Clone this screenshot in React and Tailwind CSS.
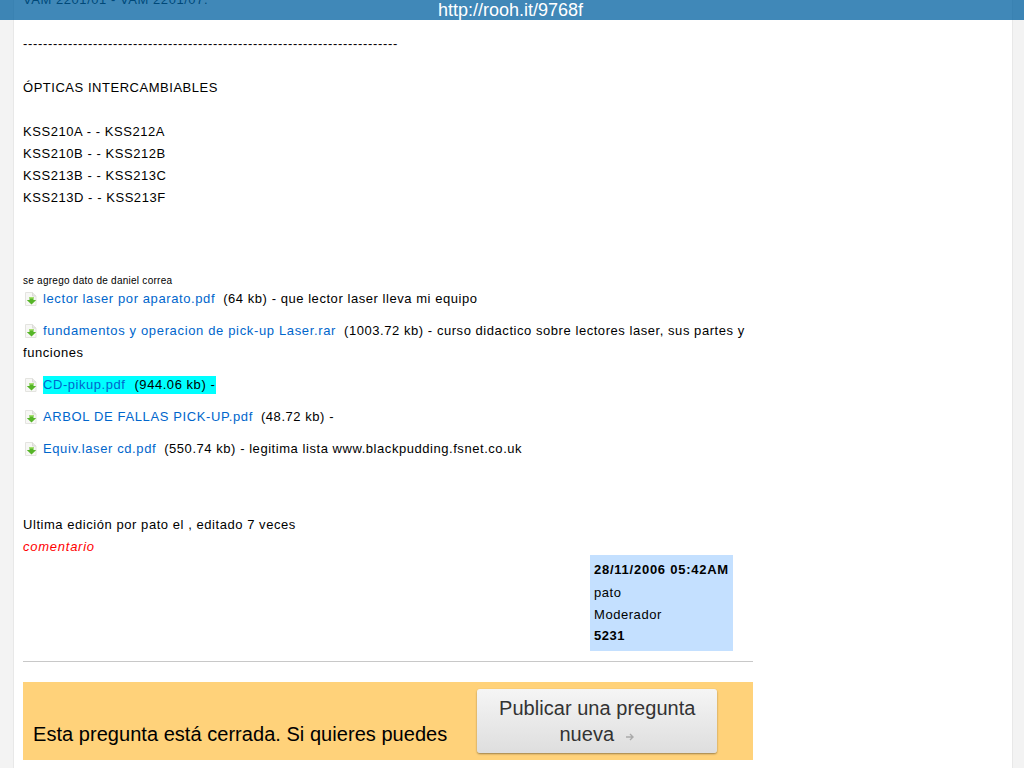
import React from "react";

const FileIcon = () => (
  <svg width="16" height="16" viewBox="0 0 16 16" className="inline-block align-[-4px] mr-[4px]">
    <path d="M2.5 1.5h7l3.5 3.5v9.5H2.5z" fill="#f7f7f5" stroke="#e4e4e0" />
    <path d="M9.5 1.5V5H13" fill="#e8e8e4" stroke="#dcdcd8" />
    <path d="M6.5 6h4v3h2.7l-4.7 4.5L3.8 9h2.7z" fill="#56b528" />
    <path d="M6.5 6h4v1.5h-4z" fill="#a5e06a" />
  </svg>
);

const Attachment = ({ name, linkClass = "tracking-[0.6px]", children }) => (
  <p className="mb-[10px]">
    <FileIcon />
    <a className={`text-[#0066cc] ${linkClass}`}>{name}</a>
    <span className="ml-[8px]">{children}</span>
  </p>
);

export default function App() {
  return (
    <div className="relative h-screen overflow-hidden bg-[#f3f3f3] font-['Liberation_Sans',sans-serif] text-[13px] leading-[22px] tracking-[0.55px] text-black">
      {/* Short link bar */}
      <div className="absolute top-0 left-0 right-0 h-5 bg-[#0060a0]/75 pr-[3px] text-center text-[18px] leading-[21px] tracking-normal text-white z-10">
        http://rooh.it/9768f
      </div>

      <div className="ml-[13px] w-[1000px] h-full overflow-hidden bg-white border-x border-[#e8e8e8] pl-[9px]">
        <div className="w-[730px] mt-[-11px]">
          <p>VAM 2201/01 - VAM 2201/07.</p>
          <p className="mt-[22px] tracking-[0.67px]">---------------------------------------------------------------------------</p>
          <p className="mt-[22px] tracking-[0.53px]">ÓPTICAS INTERCAMBIABLES</p>
          <p className="mt-[22px]">KSS210A - - KSS212A</p>
          <p>KSS210B - - KSS212B</p>
          <p>KSS213B - - KSS213C</p>
          <p>KSS213D - - KSS213F</p>

          <p className="mt-[66px] h-[13px] text-[10px] leading-[12px] tracking-[0.26px]">se agrego dato de daniel correa</p>
          <Attachment name="lector laser por aparato.pdf">(64 kb) - que lector laser lleva mi equipo</Attachment>
          <Attachment name="fundamentos y operacion de pick-up Laser.rar" linkClass="tracking-[0.65px]">
            (1003.72 kb) - curso didactico sobre lectores laser, sus partes y funciones
          </Attachment>
          <p className="mb-[10px]">
            <FileIcon />
            <span className="inline-block bg-[#00ffff] leading-[18px] pr-[1px]">
              <a className="text-[#0066cc]">CD-pikup.pdf</a>
              <span className="ml-[9px]">(944.06 kb) -</span>
            </span>
          </p>
          <Attachment name="ARBOL DE FALLAS PICK-UP.pdf" linkClass="tracking-[0.63px]">(48.72 kb) -</Attachment>
          <Attachment name="Equiv.laser cd.pdf">(550.74 kb) - legitima lista www.blackpudding.fsnet.co.uk</Attachment>

          <p className="mt-[54px]">Ultima edición por pato el , editado 7 veces</p>
          <p className="italic tracking-[0.75px] text-[#ff0000]">comentario</p>

          <div className="flex justify-end pr-[20px] mt-[-3px]">
            <div className="w-[143px] h-[96px] bg-[#c4e0ff] px-[4px] pt-[4px]">
              <p className="font-bold tracking-[0.75px] whitespace-nowrap mb-[1px]">28/11/2006 05:42AM</p>
              <p>pato</p>
              <p>Moderador</p>
              <p className="font-bold mt-[-1px]">5231</p>
            </div>
          </div>

          <hr className="mt-[10px] border-[#c8c8c8]" />

          <div className="mt-[20px] h-[78px] bg-[#ffd27a] flex items-center pl-[10px] text-[20px] leading-[26px] tracking-[0.04px]">
            <span className="mt-[25px]">Esta pregunta está cerrada. Si quieres puedes</span>
            <button className="ml-[30px] w-[240px] h-[64px] rounded-[3px] bg-gradient-to-b from-[#f5f5f5] to-[#dedede] text-[#333] shadow-[0_1px_2px_rgba(0,0,0,0.4)] text-center">
              Publicar una pregunta
              <br />
              nueva
              <svg width="10" height="10" viewBox="0 0 10 10" className="inline-block ml-[11px] align-[-1px]">
                <path d="M1 5h7M5 2l3 3-3 3" fill="none" stroke="#aaa" strokeWidth="1.4" />
              </svg>
            </button>
          </div>
        </div>
      </div>
    </div>
  );
}
